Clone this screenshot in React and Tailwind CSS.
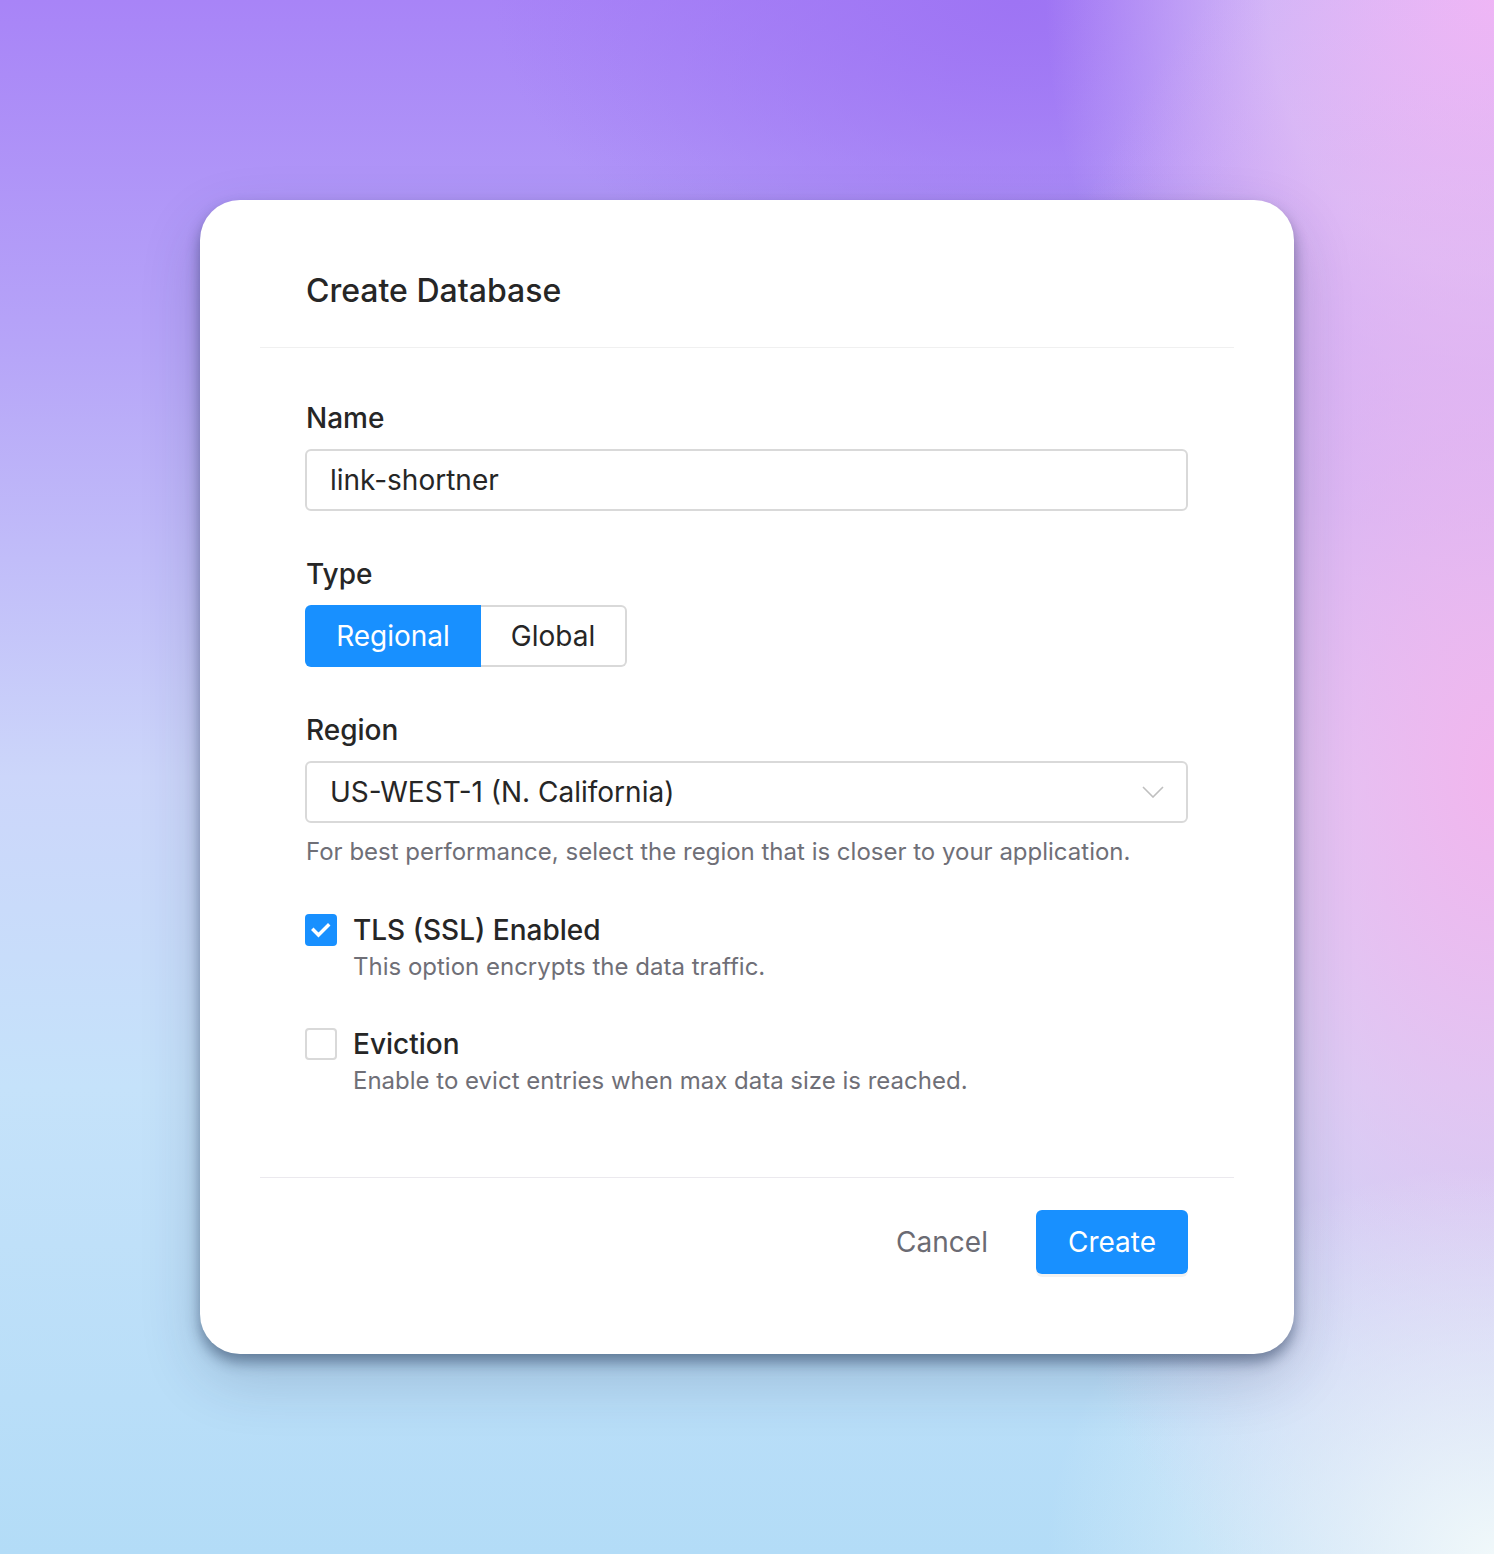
import React, { useState } from 'react';

const CreateDatabase = () => {
  const [name, setName] = useState('link-shortner');
  const [type, setType] = useState('regional');
  const [tls, setTls] = useState(true);
  const [eviction, setEviction] = useState(false);

  return (
    <div className="min-h-screen w-full flex justify-center py-[200px] font-[Inter,sans-serif] bg-[radial-gradient(ellipse_30%_25%_at_100%_100%,rgba(240,248,250,1)_0%,rgba(240,248,250,0)_100%),radial-gradient(ellipse_35%_60%_at_100%_50%,rgba(241,182,238,1)_0%,rgba(241,182,238,0)_100%),radial-gradient(ellipse_30%_35%_at_100%_0%,rgba(238,182,247,1)_0%,rgba(222,196,248,0.8)_50%,rgba(222,196,248,0)_100%),radial-gradient(ellipse_35%_20%_at_68%_0%,rgba(158,116,244,1)_0%,rgba(158,116,244,0)_100%),linear-gradient(180deg,#a884f7_0%,#b6a4f8_22%,#ccd6fa_50%,#c5e2fa_70%,#b3dcf7_100%)]">
      <div className="w-[1094px] bg-white rounded-[40px] px-[60px] shadow-[0_8px_14px_rgba(20,40,70,0.45),0_24px_60px_rgba(30,40,80,0.2)]">
        {/* Header */}
        <div className="px-[46px] pt-[69px] pb-[34px] border-b border-[#f0f0f0]">
          <h2 className="text-[32px] leading-[44px] font-medium text-[#262626]">Create Database</h2>
        </div>

        {/* Body */}
        <div className="pl-[45px] pr-[46px] pt-[48px] pb-[79px]">
          <label className="block pl-px text-[28px] leading-[44px] font-medium text-[#262626] mb-[9px]">Name</label>
          <input
            value={name}
            onChange={(e) => setName(e.target.value)}
            className="w-full h-[62px] border-2 border-[#d9d9d9] rounded-[6px] px-[23px] text-[28px] text-[#262626] outline-none"
          />

          <label className="block pl-px mt-[41px] text-[28px] leading-[44px] font-medium text-[#262626] mb-[9px]">Type</label>
          <div className="flex">
            <button
              type="button"
              onClick={() => setType('regional')}
              className={`h-[62px] w-[176px] rounded-l-[6px] text-[28px] ${
                type === 'regional'
                  ? 'bg-[#1890ff] text-white'
                  : 'bg-white text-[#262626] border-2 border-[#d9d9d9]'
              }`}
            >
              Regional
            </button>
            <button
              type="button"
              onClick={() => setType('global')}
              className={`h-[62px] w-[146px] rounded-r-[6px] text-[28px] ${
                type === 'global'
                  ? 'bg-[#1890ff] text-white'
                  : 'bg-white text-[#262626] border-2 border-l-0 border-[#d9d9d9]'
              }`}
            >
              Global
            </button>
          </div>

          <label className="block pl-px mt-[41px] text-[28px] leading-[44px] font-medium text-[#262626] mb-[9px]">Region</label>
          <div className="w-full h-[62px] border-2 border-[#d9d9d9] rounded-[6px] pl-[23px] pr-[22px] flex items-center justify-between">
            <span className="text-[28px] text-[#262626]">US-WEST-1 (N. California)</span>
            <svg width="22" height="12" viewBox="0 0 22 12" fill="none">
              <polyline points="1,1 11,11 21,1" stroke="#bfbfbf" strokeWidth="1.6" />
            </svg>
          </div>
          <p className="mt-[11px] pl-px text-[24px] leading-[36px] text-[#6f6f77]">
            For best performance, select the region that is closer to your application.
          </p>

          {/* TLS */}
          <div className="mt-[40px]">
            <div className="flex items-center gap-[16px] h-[40px]">
              <button
                type="button"
                onClick={() => setTls(!tls)}
                className={`w-[32px] h-[32px] rounded-[4px] flex items-center justify-center ${
                  tls ? 'bg-[#1890ff]' : 'bg-white border-2 border-[#d9d9d9]'
                }`}
              >
                {tls && (
                  <svg width="32" height="32" viewBox="0 0 32 32" fill="none">
                    <polyline points="8.5,16 13.5,21 23,11.5" stroke="white" strokeWidth="3.5" strokeLinecap="square" />
                  </svg>
                )}
              </button>
              <span className="text-[28px] leading-[40px] font-medium text-[#262626]">TLS (SSL) Enabled</span>
            </div>
            <p className="pl-[48px] text-[24px] leading-[34px] text-[#6f6f77]">This option encrypts the data traffic.</p>
          </div>

          {/* Eviction */}
          <div className="mt-[40px]">
            <div className="flex items-center gap-[16px] h-[40px]">
              <button
                type="button"
                onClick={() => setEviction(!eviction)}
                className={`w-[32px] h-[32px] rounded-[4px] flex items-center justify-center ${
                  eviction ? 'bg-[#1890ff]' : 'bg-white border-2 border-[#d9d9d9]'
                }`}
              >
                {eviction && (
                  <svg width="32" height="32" viewBox="0 0 32 32" fill="none">
                    <polyline points="8.5,16 13.5,21 23,11.5" stroke="white" strokeWidth="3.5" strokeLinecap="square" />
                  </svg>
                )}
              </button>
              <span className="text-[28px] leading-[40px] font-medium text-[#262626]">Eviction</span>
            </div>
            <p className="pl-[48px] text-[24px] leading-[34px] text-[#6f6f77]">
              Enable to evict entries when max data size is reached.
            </p>
          </div>
        </div>

        {/* Footer */}
        <div className="border-t border-[#ebe9ee] px-[46px] pt-[32px] pb-[80px] flex justify-end gap-[16px]">
          <button type="button" className="h-[64px] px-[32px] text-[28px] text-[#6b6b73]">
            Cancel
          </button>
          <button
            type="button"
            className="h-[64px] px-[32px] rounded-[6px] bg-[#1890ff] text-white text-[28px] shadow-[0_3px_0_rgba(0,0,0,0.05)]"
          >
            Create
          </button>
        </div>
      </div>
    </div>
  );
};

export default CreateDatabase;
